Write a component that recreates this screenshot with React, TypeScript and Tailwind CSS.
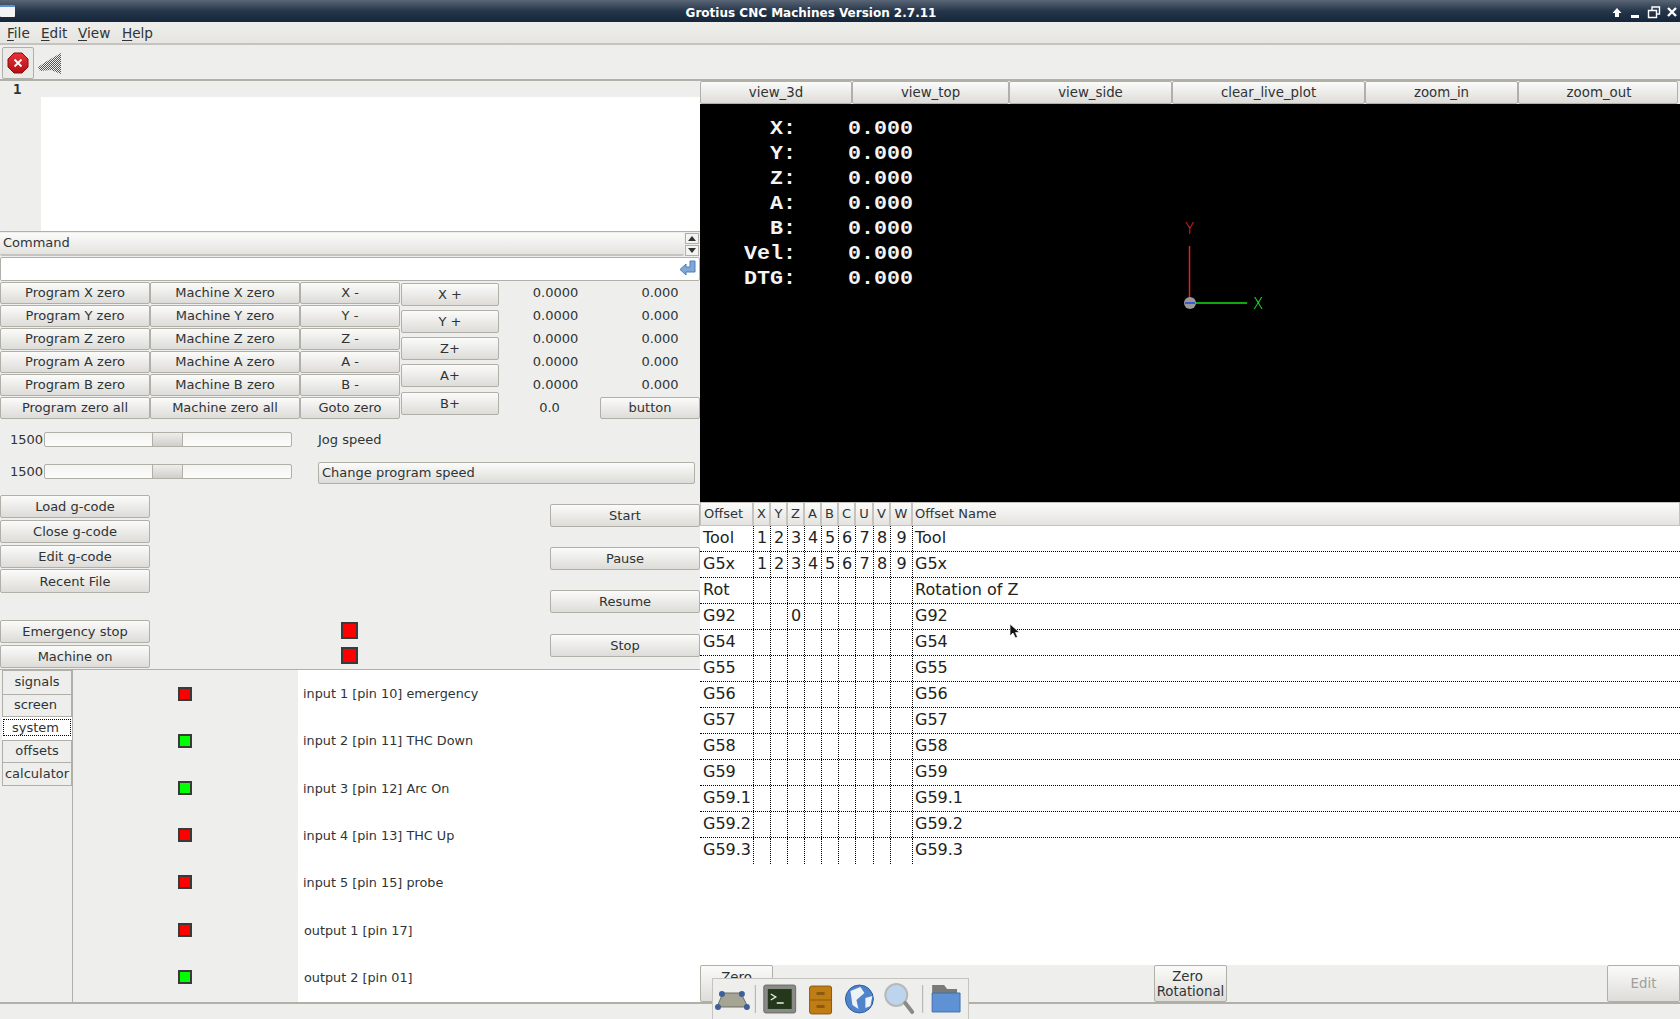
import React from "react";

const SANS = "font-['DejaVu_Sans',sans-serif]";

interface BtnProps {
  label: React.ReactNode;
  big?: boolean;
  className?: string;
}

// GTK looking push button
const Btn: React.FC<BtnProps> = ({ label, big, className = "" }) => (
  <div
    className={`flex items-center justify-center rounded-[2px] border border-[#b0afa8] bg-gradient-to-b from-[#fbfbfa] to-[#dddcd8] leading-[15px] text-[#2e3436] ${big ? "text-[13.33px]" : "text-[13px]"} ${className}`}
  >
    {label}
  </div>
);

const Led: React.FC<{ on?: boolean; className?: string }> = ({ on, className = "" }) => (
  <div className={`border-2 border-[#3a3a3a] ${on ? "bg-[#00ff00]" : "bg-[#ff0000]"} ${className}`} />
);

const Slider: React.FC<{ className?: string }> = ({ className = "" }) => (
  <div className={`flex h-[15px] items-center ${className}`}>
    <span className="w-[43px] text-right text-[13px] leading-[15px] text-[#2e3436]">1500</span>
    <div className="ml-px flex h-[15px] w-[248px] rounded-[2px] border border-[#b0afa8] bg-gradient-to-b from-[#f4f4f2] to-[#fbfbfa]">
      <div className="ml-[107px] h-full w-[31px] border-x border-[#b0afa8] bg-gradient-to-b from-[#eeeeec] to-[#d0cfcb]" />
    </div>
  </div>
);

const zeroRows = [
  ["Program X zero", "Machine X zero", "X -"],
  ["Program Y zero", "Machine Y zero", "Y -"],
  ["Program Z zero", "Machine Z zero", "Z -"],
  ["Program A zero", "Machine A zero", "A -"],
  ["Program B zero", "Machine B zero", "B -"],
  ["Program zero all", "Machine zero all", "Goto zero"],
];

const signals = [
  { label: "input 1 [pin 10] emergency", on: false },
  { label: "input 2 [pin 11] THC Down", on: true },
  { label: "input 3 [pin 12] Arc On", on: true },
  { label: "input 4 [pin 13] THC Up", on: false },
  { label: "input 5 [pin 15] probe", on: false },
  { label: "output 1 [pin 17]", on: false },
  { label: "output 2 [pin 01]", on: true },
];

const columns = [
  { name: "Offset", w: "w-[53px]" },
  { name: "X", w: "w-[17px]" },
  { name: "Y", w: "w-[17px]" },
  { name: "Z", w: "w-[17px]" },
  { name: "A", w: "w-[17px]" },
  { name: "B", w: "w-[17px]" },
  { name: "C", w: "w-[17px]" },
  { name: "U", w: "w-[18px]" },
  { name: "V", w: "w-[17px]" },
  { name: "W", w: "w-[22px]" },
];

const digits = ["1", "2", "3", "4", "5", "6", "7", "8", "9"];
const blank = ["", "", "", "", "", "", "", "", ""];

const offsetRows = [
  { name: "Tool", vals: digits, title: "Tool" },
  { name: "G5x", vals: digits, title: "G5x" },
  { name: "Rot", vals: blank, title: "Rotation of Z" },
  { name: "G92", vals: ["", "", "0", "", "", "", "", "", ""], title: "G92" },
  { name: "G54", vals: blank, title: "G54" },
  { name: "G55", vals: blank, title: "G55" },
  { name: "G56", vals: blank, title: "G56" },
  { name: "G57", vals: blank, title: "G57" },
  { name: "G58", vals: blank, title: "G58" },
  { name: "G59", vals: blank, title: "G59" },
  { name: "G59.1", vals: blank, title: "G59.1" },
  { name: "G59.2", vals: blank, title: "G59.2" },
  { name: "G59.3", vals: blank, title: "G59.3" },
];

const dro = ["  X:    0.000", "  Y:    0.000", "  Z:    0.000", "  A:    0.000", "  B:    0.000", "Vel:    0.000", "DTG:    0.000"];

const Mnemonic: React.FC<{ first: string; rest: string }> = ({ first, rest }) => (
  <span>
    <span className="underline underline-offset-2">{first}</span>
    {rest}
  </span>
);

const TitleBar = () => (
  <div className="relative flex h-[22px] items-center justify-center bg-gradient-to-b from-[#5a6675] via-[#26364a] to-[#16263a] pt-[4px]">
    <div className="absolute left-0 top-[5px] h-[12px] w-[15px] rounded-[1px] border-t-2 border-[#5b8fd0] bg-[#f4f4f2]" />
    <span className="mr-[58px] text-[12px] font-bold leading-[15px] text-white">Grotius CNC Machines Version 2.7.11</span>
    <div className="absolute right-[1px] top-[1px] flex h-full items-center gap-[4px]">
      <svg width="14" height="14" viewBox="0 0 14 14" className="mr-[1px]">
        <path d="M7 3 L11.5 8 H9 V12 H5 V8 H2.5 Z" fill="#fff" />
      </svg>
      <svg width="14" height="14" viewBox="0 0 14 14">
        <rect x="2" y="10" width="8" height="3" fill="#fff" />
      </svg>
      <svg width="14" height="14" viewBox="0 0 14 14">
        <path d="M1.5 5.5 H9.5 V12.5 H1.5 Z M5 5 V2 H12.5 V9 H9.5" fill="none" stroke="#fff" strokeWidth="1.4" />
      </svg>
      <svg width="14" height="14" viewBox="0 0 14 14">
        <path d="M3 3 L11 11 M11 3 L3 11" stroke="#fff" strokeWidth="2.4" />
      </svg>
    </div>
  </div>
);

const MenuBar = () => (
  <div className="flex h-[23px] items-center border-b-2 border-[#c4c3bd] bg-gradient-to-b from-[#eeeeec] to-[#e6e5e1] pl-[7px] pt-px text-[13.6px] text-[#2e3436]">
    <span className="w-[34px]"><Mnemonic first="F" rest="ile" /></span>
    <span className="w-[37px]"><Mnemonic first="E" rest="dit" /></span>
    <span className="w-[44px]"><Mnemonic first="V" rest="iew" /></span>
    <span><Mnemonic first="H" rest="elp" /></span>
  </div>
);

const Toolbar = () => (
  <div className="flex h-[36px] items-center border-b-2 border-[#b0afa8] bg-[#eeeeec] pl-[2px] pt-px">
    <div className="flex h-[32px] w-[32px] items-center justify-center rounded-[2px] border border-[#b0afa8] bg-[#eaeae8]">
      <svg width="22" height="22" viewBox="0 0 22 22">
        <defs>
          <linearGradient id="stopRed" x1="0" y1="0" x2="0" y2="1">
            <stop offset="0" stopColor="#e8343a" />
            <stop offset="1" stopColor="#b40d14" />
          </linearGradient>
        </defs>
        <path d="M7 1 H15 L21 7 V15 L15 21 H7 L1 15 V7 Z" fill="url(#stopRed)" stroke="#8f0b10" />
        <path d="M7.5 7.5 L14.5 14.5 M14.5 7.5 L7.5 14.5" stroke="#fff" strokeWidth="1.8" />
      </svg>
    </div>
    <svg width="26" height="26" viewBox="0 0 26 26" className="ml-[3px]">
      <defs>
        <pattern id="hatch" width="2" height="2" patternUnits="userSpaceOnUse">
          <rect width="1" height="1" fill="#555" />
          <rect x="1" y="1" width="1" height="1" fill="#555" />
        </pattern>
      </defs>
      <path d="M1 17 L10 11 L24 3 V24 L14 20 L3 21 Z" fill="url(#hatch)" />
    </svg>
  </div>
);

const LeftPanel = () => (
  <div className="flex h-[921px] w-[700px] flex-col">
    {/* code view */}
    <div className="flex h-[150px] shrink-0 bg-white">
      <div className="w-[41px] bg-[#eeeeec] pl-[13px] font-['DejaVu_Sans_Mono',monospace] text-[14px] font-bold leading-[17px] text-[#2e3436]">1</div>
      <div className="h-[16px] flex-1 bg-[#eeeeec]" />
    </div>

    {/* command */}
    <div className="flex h-[26px] shrink-0 border-t border-[#b0afa8] pt-px">
      <div className="flex h-[23px] w-[684px] items-center rounded-[2px] border-b-2 border-[#c4c3bd] bg-gradient-to-b from-[#fbfbfa] to-[#e4e3e0] pb-[2px] pl-[3px] text-[13px] text-[#2e3436]">
        Command
      </div>
      <div className="ml-px flex w-[14px] flex-col gap-px">
        <div className="flex h-[11px] items-center justify-center border border-[#b0afa8] bg-[#f4f4f2]">
          <div className="h-0 w-0 border-x-[4px] border-b-[5px] border-x-transparent border-b-[#2e3436]" />
        </div>
        <div className="flex h-[11px] items-center justify-center border border-[#b0afa8] bg-[#f4f4f2]">
          <div className="h-0 w-0 border-x-[4px] border-t-[5px] border-x-transparent border-t-[#2e3436]" />
        </div>
      </div>
    </div>
    <div className="flex h-[24px] shrink-0 items-center justify-end rounded-[2px] border border-[#b0afa8] bg-white pr-[2px]">
      <svg width="18" height="18" viewBox="0 0 18 18">
        <path d="M16 1 H11 V7 H7 V4 L1 9.5 L7 15 V12 H16 Z" fill="#7fa8d6" stroke="#4d7fb8" />
      </svg>
    </div>

    {/* axis buttons */}
    <div className="flex h-[138px] shrink-0 pt-px">
      <div className="grid grid-cols-[150px_150px_100px] grid-rows-[repeat(6,22px)] gap-y-px">
        {zeroRows.flat().map((t) => (
          <Btn key={t} label={t} className="pb-[2px]" />
        ))}
      </div>
      <div className="ml-px flex w-[99px] flex-col pt-px">
        <Btn label="X +" className="h-[23px]" />
        <Btn label="Y +" className="mt-[4px] h-[23px]" />
        <Btn label="Z+" className="mt-[4px] h-[23px]" />
        <Btn label="A+" className="mt-[4px] h-[23px]" />
        <Btn label="B+" className="mt-[5px] h-[23px]" />
      </div>
      <div className="grid flex-1 grid-cols-[101px_100px] grid-rows-[repeat(6,22px)] gap-y-px text-[13px] text-[#2e3436]">
        {[0, 1, 2, 3, 4].map((i) => (
          <React.Fragment key={i}>
            <span className="flex items-center justify-center pl-[12px]">0.0000</span>
            <span className="flex items-center justify-center pl-[20px]">0.000</span>
          </React.Fragment>
        ))}
        <span className="flex items-center justify-center">0.0</span>
        <Btn label="button" className="pb-[2px]" />
      </div>
    </div>

    {/* speed sliders */}
    <div className="mt-[13px] flex h-[15px] shrink-0 items-center">
      <Slider />
      <span className="ml-[26px] text-[13px] leading-[15px] text-[#2e3436]">Jog speed</span>
    </div>
    <div className="mt-[15px] flex h-[22px] shrink-0 items-center">
      <Slider className="mb-[3px]" />
      <Btn label="Change program speed" className="ml-[26px] h-[22px] w-[377px] justify-start pb-[2px] pl-[3px]" />
    </div>

    {/* load and run */}
    <div className="mt-[11px] flex h-[174px] shrink-0 justify-between">
      <div className="flex w-[150px] flex-col">
        <Btn label="Load g-code" className="h-[23px]" />
        <Btn label="Close g-code" className="mt-[2px] h-[23px]" />
        <Btn label="Edit g-code" className="mt-[2px] h-[23px]" />
        <Btn label="Recent File" className="mt-px h-[24px]" />
        <Btn label="Emergency stop" className="mt-[27px] h-[23px]" />
        <Btn label="Machine on" className="mt-[2px] h-[23px]" />
      </div>
      <div className="ml-[191px] flex w-[18px] flex-col pt-[127px]">
        <Led className="h-[17px] w-[17px]" />
        <Led className="mt-[8px] h-[17px] w-[17px]" />
      </div>
      <div className="ml-auto flex w-[150px] flex-col pt-[9px]">
        <Btn label="Start" className="h-[23px]" />
        <Btn label="Pause" className="mt-[20px] h-[23px]" />
        <Btn label="Resume" className="mt-[20px] h-[23px]" />
        <Btn label="Stop" className="mt-[21px] h-[23px]" />
      </div>
    </div>

    {/* tabs with signals */}
    <div className="flex h-[333px] shrink-0 border-t border-[#b0afa8]">
      <div className="flex w-[73px] flex-col items-start border-r border-[#b0afa8] pl-[2px] text-[13px] text-[#2e3436]">
        <div className="flex h-[25px] w-[70px] items-center justify-center border border-[#b0afa8] bg-[#eeeeec] pb-[2px]">signals</div>
        <div className="flex h-[22px] w-[70px] items-center justify-center border border-t-0 border-[#b0afa8] bg-[#eeeeec] pb-[2px] pr-[3px]">screen</div>
        <div className="flex h-[23px] w-[70px] items-center justify-center bg-white pb-[2px]">
          <span className="flex h-[17px] w-[68px] items-center justify-center border border-dotted border-black pr-[3px]">system</span>
        </div>
        <div className="flex h-[23px] w-[70px] items-center justify-center border border-[#b0afa8] bg-[#eeeeec] pb-[2px]">offsets</div>
        <div className="flex h-[23px] w-[70px] items-center justify-center border border-t-0 border-[#b0afa8] bg-[#eeeeec]">calculator</div>
      </div>
      <div className="flex w-[225px] flex-col">
        {signals.map((s) => (
          <div key={s.label} className="flex h-[47.2px] items-center pl-[105px]">
            <Led on={s.on} className="h-[14px] w-[14px]" />
          </div>
        ))}
      </div>
      <div className="flex flex-1 flex-col bg-white text-[12.8px] text-[#2e3436]">
        {signals.map((s) => (
          <div key={s.label} className={`flex h-[47.3px] items-center ${s.label.startsWith("output") ? "pl-[6px]" : "pl-[5px]"}`}>
            {s.label}
          </div>
        ))}
      </div>
    </div>
  </div>
);

const ViewTabs = () => {
  const tabs = [
    { t: "view_3d", w: "w-[152px]" },
    { t: "view_top", w: "w-[157px]" },
    { t: "view_side", w: "w-[163px]" },
    { t: "clear_live_plot", w: "w-[193px]" },
    { t: "zoom_in", w: "w-[153px]" },
    { t: "zoom_out", w: "w-[160px] pl-[2px]" },
  ];
  return (
    <div className="flex h-[23px] shrink-0">
      {tabs.map((x) => (
        <Btn key={x.t} big label={x.t} className={`${x.w} h-[23px]`} />
      ))}
    </div>
  );
};

const Plot = () => (
  <div className="relative h-[398px] shrink-0 bg-black">
    {/* the readout glyphs are wider than the mono face, so stretch them a bit */}
    <div className="origin-left scale-x-[1.1] whitespace-pre pl-[40px] pt-[13px] font-['Liberation_Mono',monospace] text-[19.7px] font-bold leading-[25px] text-[#f4f4f4]">
      {dro.map((l) => (
        <div key={l}>{l}</div>
      ))}
    </div>
    <svg width="90" height="110" viewBox="0 0 90 110" className="absolute left-[480px] top-[110px]">
      <line x1="9.5" y1="32" x2="9.5" y2="89" stroke="#e82020" strokeWidth="1.5" />
      <line x1="10" y1="89" x2="67" y2="89" stroke="#10e010" strokeWidth="1.5" />
      <circle cx="10" cy="89" r="6" fill="#999" />
      <line x1="5" y1="89" x2="15" y2="89" stroke="#2040e0" strokeWidth="1.5" />
    </svg>
    <span className="absolute left-[485px] top-[118px] text-[15px] font-extralight leading-[15px] text-[#ff3030]">Y</span>
    <span className="absolute left-[553px] top-[193px] text-[15px] font-extralight leading-[15px] text-[#30ff30]">X</span>
  </div>
);

const OffsetTable = () => (
  <div className="flex h-[500px] flex-col">
    <div className="flex h-[24px] shrink-0 text-[13px] text-[#2e3436]">
      {columns.map((c) => (
        <div key={c.name} className={`${c.w} flex items-center border border-[#c4c3bd] bg-gradient-to-b from-[#fbfbfa] to-[#e4e3e0] ${c.name === "Offset" ? "pl-[3px]" : "justify-center"}`}>
          {c.name}
        </div>
      ))}
      <div className="flex flex-1 items-center border border-[#c4c3bd] bg-gradient-to-b from-[#fbfbfa] to-[#e4e3e0] pl-[2px]">Offset Name</div>
    </div>
    <div className="flex-1 bg-white text-[16px] text-[#222]">
      {offsetRows.map((r, idx) => (
        <div key={r.name} className={`flex h-[26px] ${idx < 12 ? "border-b border-dotted border-black" : ""}`}>
          <div className="flex w-[53px] items-center pb-[2px] pl-[3px]">{r.name}</div>
          {r.vals.map((v, i) => (
            <div key={i} className={`${columns[i + 1].w} flex items-center justify-center border-l border-dotted border-black pb-[2px]`}>
              {v}
            </div>
          ))}
          <div className="flex flex-1 items-center border-l border-dotted border-black pb-[2px] pl-[2px]">{r.title}</div>
        </div>
      ))}
    </div>
    <div className="flex h-[37px] shrink-0 items-start justify-between bg-[#eeeeec]">
      <Btn big label="Zero" className="h-[37px] w-[73px] items-start pt-[4px]" />
      <Btn big label={<span className="text-center"><span className="pr-[6px]">Zero</span><br />Rotational</span>} className="ml-[381px] h-[37px] w-[73px]" />
      <Btn big label={<span className="text-[#a0a09c]">Edit</span>} className="ml-auto h-[37px] w-[73px] from-[#eeeeec] to-[#dcdbd8]" />
    </div>
  </div>
);

const Dock = () => (
  <div className="absolute bottom-0 left-[712px] flex h-[41px] w-[257px] items-center border-x border-t border-[#c4c3bd] bg-[#eeeeec]">
    <svg width="256" height="36" viewBox="0 0 256 36">
      <path d="M10 12 H28 L35 26 H4 Z" fill="#a5a596" stroke="#6d6d60" />
      <circle cx="9" cy="13" r="3" fill="#3f5f9a" />
      <circle cx="29" cy="13" r="3" fill="#3f5f9a" />
      <circle cx="5" cy="26" r="3" fill="#3f5f9a" />
      <circle cx="34" cy="26" r="3" fill="#3f5f9a" />
      <line x1="42.5" y1="4" x2="42.5" y2="32" stroke="#b0afa8" />
      <rect x="51" y="4" width="32" height="28" rx="2" fill="#8a8a86" stroke="#6a6a66" />
      <rect x="55" y="8" width="24" height="20" fill="#24381c" />
      <path d="M58 13 L63 16 L58 19 M64 22 H71" stroke="#e8f0e0" strokeWidth="1.4" fill="none" />
      <rect x="97" y="5" width="22" height="28" rx="2" fill="#c07d14" stroke="#8a5a10" />
      <line x1="97" y1="19" x2="119" y2="19" stroke="#8a5a10" />
      <rect x="104" y="11" width="8" height="3" fill="#8a5a10" />
      <rect x="104" y="24" width="8" height="3" fill="#8a5a10" />
      <circle cx="147" cy="18" r="14" fill="#4f84cd" stroke="#2f5a9a" />
      <path d="M138 10 L148 6 L152 12 L144 19 L146 28 L140 24 Z M153 17 L160 15 L158 25 L153 27 Z" fill="#eef2f6" />
      <circle cx="184" cy="14" r="11" fill="#bcd4ee" stroke="#b8b8b4" strokeWidth="2" />
      <path d="M193 22 L200 31" stroke="#8a8a86" strokeWidth="4" strokeLinecap="round" />
      <line x1="210.5" y1="4" x2="210.5" y2="32" stroke="#b0afa8" />
      <path d="M220 4 H232 L235 8 H245 V14 H220 Z" fill="#7a7a78" />
      <path d="M220 31 V12 H248 V31 Z" fill="#5e92d4" stroke="#3f6fae" />
    </svg>
  </div>
);

export default function App() {
  return (
    <div className={`relative h-[1019px] w-[1680px] overflow-hidden bg-[#eeeeec] ${SANS}`}>
      <TitleBar />
      <MenuBar />
      <Toolbar />
      <div className="flex">
        <LeftPanel />
        <div className="flex w-[980px] flex-col">
          <ViewTabs />
          <Plot />
          <OffsetTable />
        </div>
      </div>
      <div className="h-[17px] border-t-2 border-[#b0afa8] bg-[#eeeeec]" />
      <Dock />
      {/* mouse pointer */}
      <svg width="12" height="16" viewBox="0 0 12 16" className="absolute left-[1009px] top-[623px]">
        <path d="M1 1 V13 L4 10 L6.5 15 L8.5 14 L6.5 9.5 H10.5 Z" fill="#111" stroke="#fff" strokeWidth="0.7" />
      </svg>
    </div>
  );
}
